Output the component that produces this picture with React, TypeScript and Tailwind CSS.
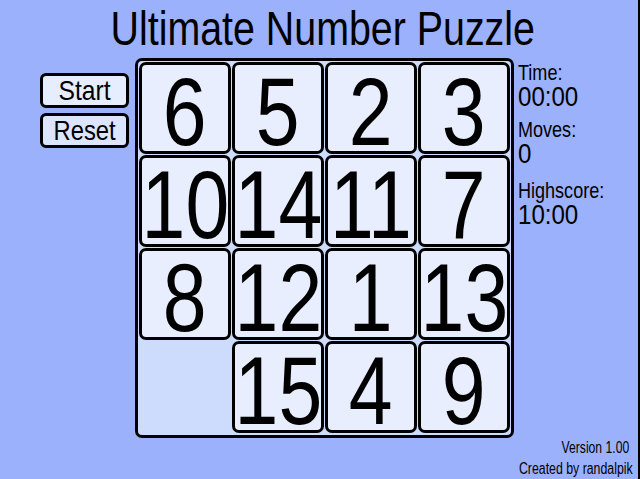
import React from "react";

// Tile order on the board, 0 marks the empty slot
const TILES = [6, 5, 2, 3, 10, 14, 11, 7, 8, 12, 1, 13, 0, 15, 4, 9];

// Arial-width face squeezed down to the narrow look of the game font
const sans = "font-['Liberation_Sans',Arial,sans-serif]";

function Tile({ value }: { value: number }) {
  if (value === 0) return <div className="w-[92px] h-[92px]" />;
  return (
    <div className="w-[92px] h-[92px] rounded-[7px] border-[3px] border-black bg-[#e8eefd] flex items-start justify-center">
      <span className="inline-block scale-x-[0.82] whitespace-nowrap text-[96px] leading-[76px] text-black pt-[9px]">
        {value}
      </span>
    </div>
  );
}

function StatBlock({ label, value, className = "" }: { label: string; value: string; className?: string }) {
  return (
    <div className={`flex flex-col items-start ${className}`}>
      <span className="inline-block origin-left scale-x-[0.82] whitespace-nowrap text-[22px] leading-[20px]">{label}</span>
      <span className="inline-block origin-left scale-x-[0.86] whitespace-nowrap text-[28px] leading-[28px]">{value}</span>
    </div>
  );
}

export default function App() {
  return (
    <div className={`${sans} w-[640px] h-[479px] bg-[#9cb1fb] border-r-2 border-black flex flex-col text-black overflow-hidden`}>
      <h1 className="h-[58px] text-[48px] leading-[58px] text-center pl-[7px] whitespace-nowrap">
        <span className="inline-block scale-x-[0.82]">Ultimate Number Puzzle</span>
      </h1>

      <div className="flex flex-1">
        {/* Controls */}
        <div className="w-[135px] shrink-0 pl-[40px] pt-[15px] flex flex-col gap-[5px]">
          <button className="w-[89px] h-[35px] rounded-[6px] border-[3px] border-black bg-[#e6edfe] text-[28px] leading-none flex items-center justify-center">
            <span className="inline-block scale-x-[0.88] whitespace-nowrap">Start</span>
          </button>
          <button className="w-[89px] h-[35px] rounded-[6px] border-[3px] border-black bg-[#dbe5fe] text-[28px] leading-none flex items-center justify-center">
            <span className="inline-block scale-x-[0.85] whitespace-nowrap">Reset</span>
          </button>
        </div>

        {/* Board */}
        <div className="w-[379px] h-[380px] shrink-0 rounded-[7px] border-[3px] border-black bg-[#cddcfd] p-[1px] grid grid-cols-[repeat(4,92px)] gap-[1px] content-start">
          {TILES.map((t, i) => (
            <Tile key={i} value={t} />
          ))}
        </div>

        {/* Stats and credits */}
        <div className="flex-1 min-w-0 flex flex-col pl-[4px] pr-[5px]">
          <StatBlock label="Time:" value="00:00" className="mt-[5px]" />
          <StatBlock label="Moves:" value="0" className="mt-[9px]" />
          <StatBlock label="Highscore:" value="10:00" className="mt-[13px]" />
          <div className="mt-auto flex flex-col items-end text-[16px] leading-[21px]">
            <span className="inline-block origin-right scale-x-[0.76] whitespace-nowrap pr-[5px]">Version 1.00</span>
            <span className="inline-block origin-right scale-x-[0.77] whitespace-nowrap">Created by randalpik</span>
          </div>
        </div>
      </div>
    </div>
  );
}
